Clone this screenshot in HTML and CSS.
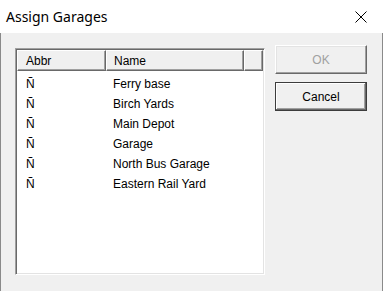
FILE: index.html
```html
<!DOCTYPE html>
<html lang="en">
<head>
    <meta charset="UTF-8">
    <title>Assign Garages</title>
    <link rel="stylesheet" href="styles.css">
</head>
<body>
    <div class="window">
        <div class="titlebar">
            <span class="title">Assign Garages</span>
            <svg class="close" width="12" height="12" viewBox="0 0 12 12">
                <path d="M0.5 0.5 L11.5 11.5 M11.5 0.5 L0.5 11.5" stroke="#000" stroke-width="1" fill="none"/>
            </svg>
        </div>
        <div class="client">
            <div class="listview">
                <div class="lv-header">
                    <div class="hcell col-abbr">Abbr</div>
                    <div class="hcell col-name">Name</div>
                    <div class="hcell col-rest"></div>
                </div>
                <div class="lv-body" id="rows"></div>
            </div>
            <div class="buttons">
                <button class="btn btn-disabled" disabled>OK</button>
                <button class="btn btn-default">Cancel</button>
            </div>
        </div>
    </div>
    <script>
        const garages = [
            "Ferry base",
            "Birch Yards",
            "Main Depot",
            "Garage",
            "North Bus Garage",
            "Eastern Rail Yard"
        ];

        const rows = document.getElementById("rows");
        garages.forEach(name => {
            const row = document.createElement("div");
            row.className = "row";
            row.innerHTML = `<span class="col-abbr">Ñ</span><span class="col-name">${name}</span>`;
            rows.appendChild(row);
        });
    </script>
</body>
</html>
```

FILE: styles.css
```css
body {
    margin: 0;
    background: #ffffff;
    font-family: 'Liberation Sans', Arial, sans-serif;
}
.window {
    width: 383px;
    height: 291px;
    display: flex;
    flex-direction: column;
    overflow: hidden;
}
.titlebar {
    height: 33px;
    flex-shrink: 0;
    display: flex;
    align-items: center;
    justify-content: space-between;
    padding: 0 16px 0 6px;
    background: #ffffff;
}
.title {
    font-family: 'Noto Sans', 'Open Sans', sans-serif;
    font-size: 14px;
    color: #000000;
    margin-top: -1px;
}
.close {
    display: block;
}
.client {
    flex: 1;
    display: flex;
    align-items: flex-start;
    padding: 12px 0 0 14px;
    background: #f0f0f0;
    border-left: 1px solid #8a8a8a;
    border-right: 1px solid #8a8a8a;
}
.listview {
    width: 246px;
    height: 223px;
    margin-top: 3px;
    background: #ffffff;
    border-top: 1px solid #a0a0a0;
    border-left: 1px solid #a0a0a0;
    border-right: 1px solid #ffffff;
    border-bottom: 1px solid #ffffff;
    box-shadow: inset 1px 1px 0 #696969, inset -1px -1px 0 #e3e3e3;
    padding: 1px 1px 1px 1px;
    font-size: 12px;
    color: #000000;
}
.lv-header {
    display: flex;
    height: 21px;
}
.hcell {
    box-sizing: border-box;
    height: 21px;
    line-height: 20px;
    background: #f0f0f0;
    border-top: 1px solid #ffffff;
    border-left: 1px solid #ffffff;
    border-right: 1px solid #696969;
    border-bottom: 1px solid #696969;
    box-shadow: inset -1px -1px 0 #a0a0a0;
}
.lv-header .col-abbr {
    width: 89px;
    padding-left: 8px;
}
.lv-header .col-name {
    width: 138px;
    padding-left: 7px;
}
.col-rest {
    flex: 1;
}
.lv-body {
    padding-top: 3px;
}
.row {
    display: flex;
    height: 20px;
    line-height: 20px;
}
.row .col-abbr {
    width: 96px;
    padding-left: 9px;
    box-sizing: border-box;
}
.row .col-name {
    padding-left: 0;
}
.buttons {
    display: flex;
    flex-direction: column;
    gap: 8px;
    margin-left: 10px;
}
.btn {
    width: 92px;
    height: 29px;
    padding: 0;
    font-family: 'Liberation Sans', Arial, sans-serif;
    font-size: 12px;
    background: #f0f0f0;
    color: #000000;
    border-top: 1px solid #ffffff;
    border-left: 1px solid #ffffff;
    border-right: 1px solid #696969;
    border-bottom: 1px solid #696969;
    box-shadow: inset -1px -1px 0 #a0a0a0, inset 1px 1px 0 #e3e3e3;
}
.btn-disabled {
    color: #a0a0a0;
}
.btn-default {
    border: 1px solid #3c3c3c;
    box-shadow: inset -1px -1px 0 #696969, inset 1px 1px 0 #ffffff, inset -2px -2px 0 #a0a0a0;
}
```
